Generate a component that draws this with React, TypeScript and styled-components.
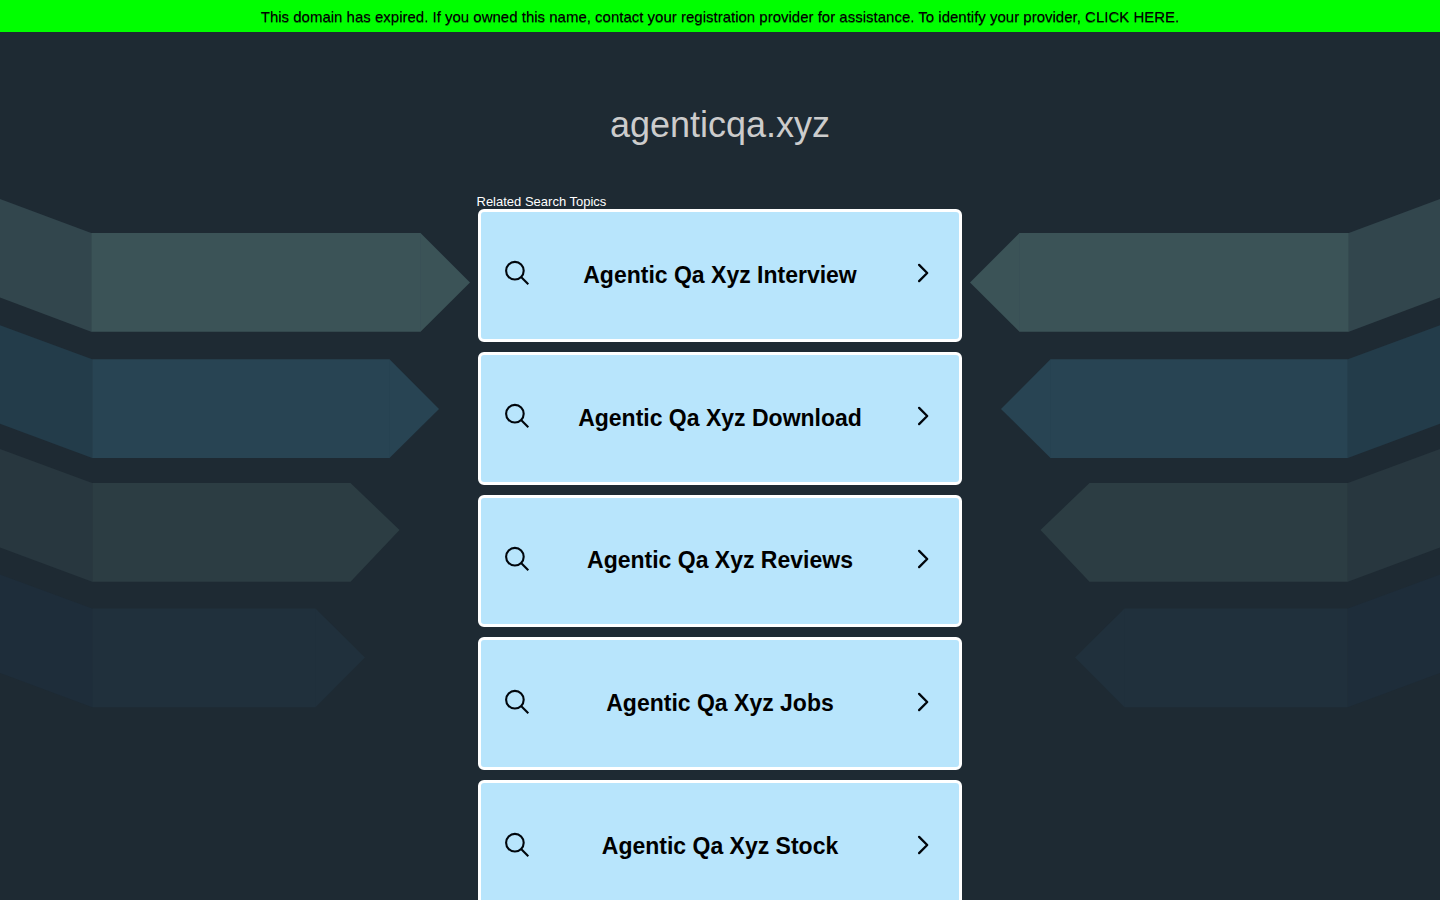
import styled, { createGlobalStyle } from 'styled-components';

const GlobalStyle = createGlobalStyle`
  * {
    box-sizing: border-box;
  }

  body {
    margin: 0;
    overflow: hidden;
    background: #1e2a33;
    font-family: 'Liberation Sans', Arial, sans-serif;
  }
`;

const Page = styled.div`
  position: relative;
  height: 900px;
  overflow: hidden;
  background: #1e2a33;
`;

const Banner = styled.a`
  display: block;
  height: 32px;
  padding-top: 8px;
  background: #00ff00;
  color: #000;
  font-size: 15px;
  line-height: 17px;
  text-align: center;
  text-decoration: none;
  text-shadow: 0 1px 0 rgba(0, 0, 0, 0.45);
`;

const Backdrop = styled.svg`
  position: absolute;
  top: 0;
  left: 0;
  width: 1440px;
  height: 900px;
  pointer-events: none;
`;

const Main = styled.main`
  position: relative;
  width: 484px;
  margin: 0 auto;
`;

const Domain = styled.h1`
  margin: 0;
  padding-top: 72px;
  color: #ccc;
  font-size: 36px;
  font-weight: 400;
  line-height: 41px;
  text-align: center;
`;

const Label = styled.div`
  margin: 49px 0 0 -1.5px;
  color: #fff;
  font-size: 13px;
  line-height: 15px;
`;

const Topics = styled.div`
  display: flex;
  flex-direction: column;
  gap: 10px;
`;

const Topic = styled.a`
  display: flex;
  align-items: center;
  flex-shrink: 0;
  height: 132.8px;
  padding: 0 30px 0 24px;
  border: 3px solid #fff;
  border-radius: 6px;
  background: #b8e5fc;
  color: #000;
  text-decoration: none;
`;

const TopicName = styled.span`
  flex: 1;
  padding: 0 6px 0.2px 0;
  font-size: 23px;
  font-weight: 700;
  line-height: 27px;
  text-align: center;
`;

const Icon = styled.svg`
  flex-shrink: 0;
  margin-bottom: 4px;
  overflow: visible;
  fill: none;
  stroke: #00060c;
`;

const topics = [
  'Agentic Qa Xyz Interview',
  'Agentic Qa Xyz Download',
  'Agentic Qa Xyz Reviews',
  'Agentic Qa Xyz Jobs',
  'Agentic Qa Xyz Stock',
];

interface Ribbon {
  top: number;
  tipY: number;
  shoulder: number;
  tip: number;
  seam: number;
  fill: string;
  fold: string;
  line?: string;
}

const ribbons: Ribbon[] = [
  { top: 233, tipY: 282.5, shoulder: 420.5, tip: 470, seam: 91.2, fill: '#3b5357', fold: '#32464d', line: '#395056' },
  { top: 359.3, tipY: 409, shoulder: 389.5, tip: 439, seam: 92.2, fill: '#284453', fold: '#233c4a', line: '#264251' },
  { top: 483, tipY: 530, shoulder: 350.5, tip: 399.5, seam: 92.2, fill: '#2c3d43', fold: '#28373f' },
  { top: 608.5, tipY: 657.5, shoulder: 315.5, tip: 365, seam: 92.2, fill: '#20303c', fold: '#1e2d3a', line: '#1f2f3b' },
];

function Ribbons() {
  return (
    <>
      {ribbons.map(({ top, tipY, shoulder, tip, seam, fill, fold, line }) => (
        <g key={top}>
          <path d={`M0 ${top - 34} L${seam} ${top} V${top + 98.7} L0 ${top + 64.5} Z`} fill={fold} />
          <path d={`M${seam} ${top} H${shoulder} L${tip} ${tipY} L${shoulder} ${top + 98.7} H${seam} Z`} fill={fill} />
          {line && <path d={`M${shoulder} ${top + 1} V${top + 98}`} stroke={line} />}
        </g>
      ))}
    </>
  );
}

function App() {
  return (
    <Page>
      <GlobalStyle />
      <Backdrop viewBox="0 0 1440 900" aria-hidden="true">
        <Ribbons />
        <g transform="translate(1440 0) scale(-1 1)">
          <Ribbons />
        </g>
      </Backdrop>
      <Banner href="#">
        This domain has expired. If you owned this name, contact your registration provider for assistance. To identify
        your provider, CLICK HERE.
      </Banner>
      <Main>
        <Domain>agenticqa.xyz</Domain>
        <Label>Related Search Topics</Label>
        <Topics>
          {topics.map((topic) => (
            <Topic key={topic} href="#">
              <Icon width="24" height="24" viewBox="0 0 24 24" strokeWidth="2.1">
                <circle cx="9.9" cy="9.7" r="8.8" />
                <path d="M16.1 16 L23.3 23.2" />
              </Icon>
              <TopicName>{topic}</TopicName>
              <Icon width="12" height="20" viewBox="0 0 12 20" strokeWidth="2.3" strokeLinecap="round" strokeLinejoin="round">
                <path d="M2.1 1.9 L10.2 10 L2.1 18.1" />
              </Icon>
            </Topic>
          ))}
        </Topics>
      </Main>
    </Page>
  );
}

export default App;
